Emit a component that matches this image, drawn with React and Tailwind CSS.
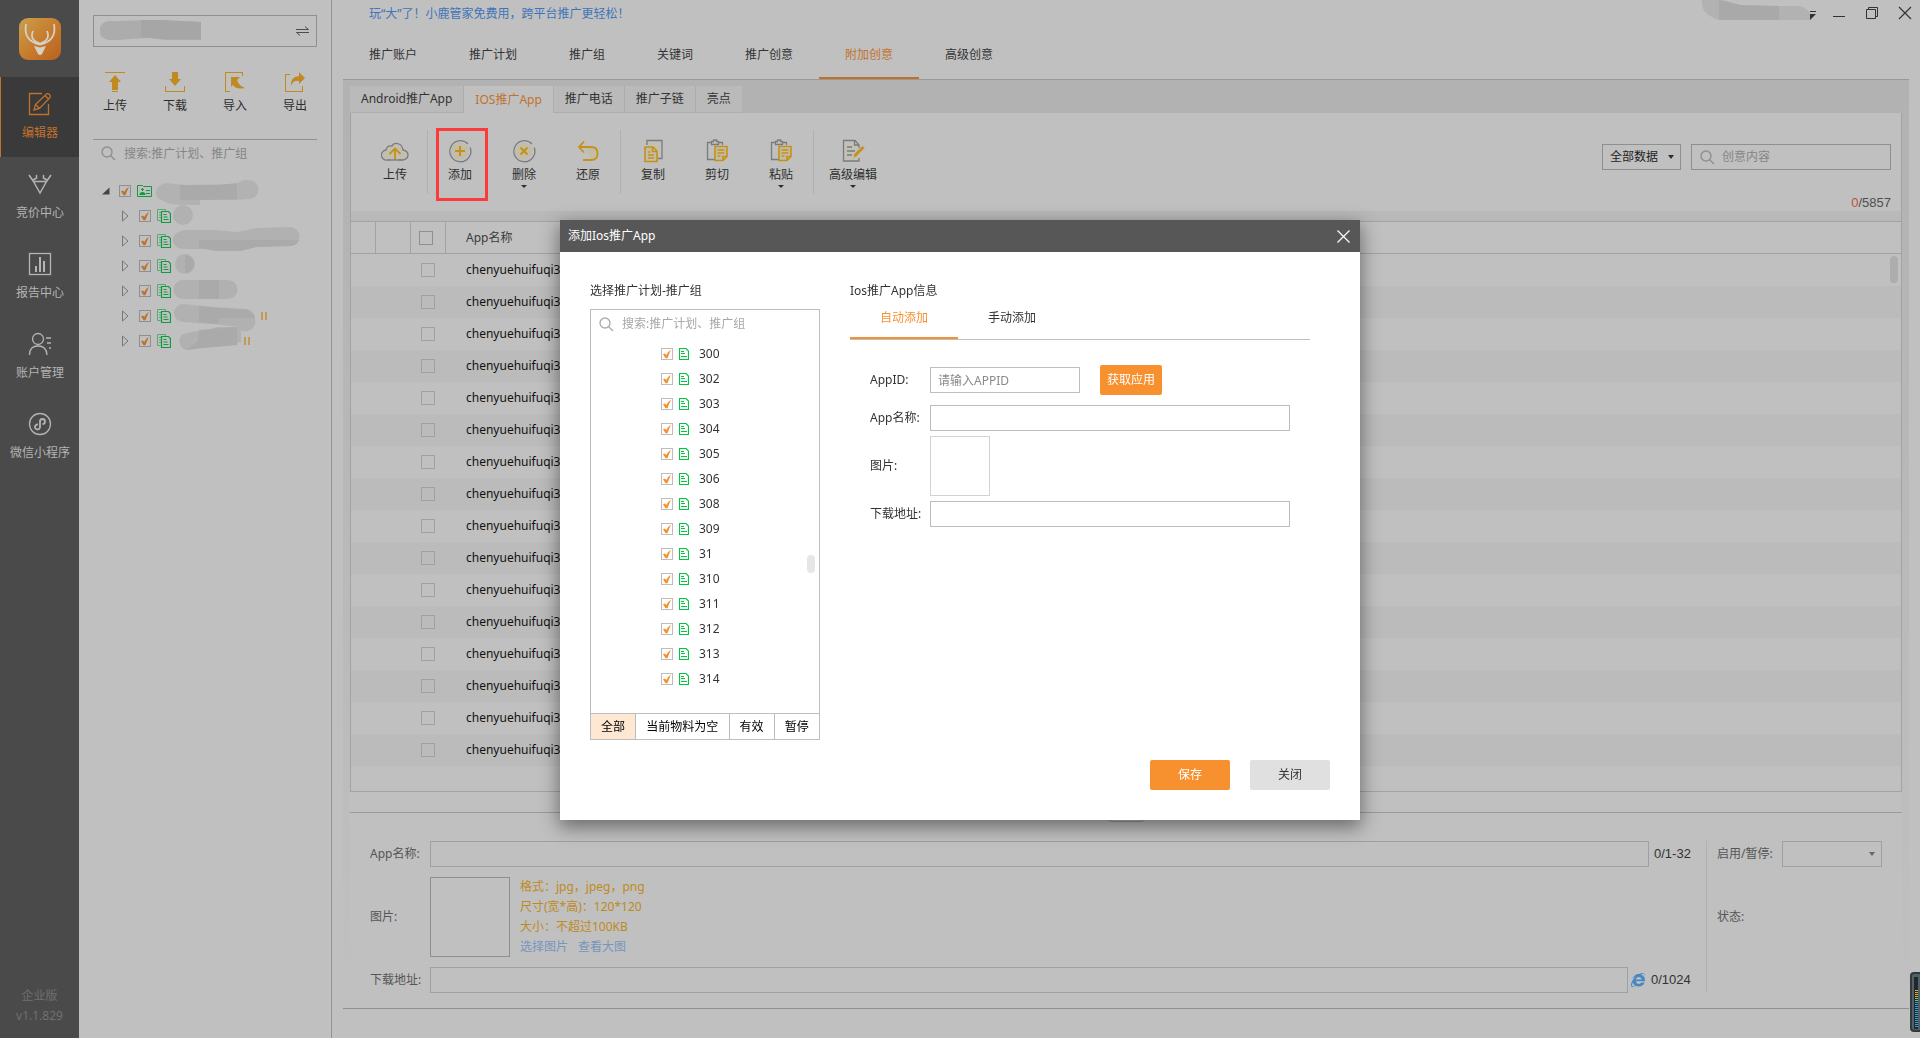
/* App.jsx */
import React, { useState } from 'react';
import { FaInternetExplorer } from 'react-icons/fa';

const sideItems = [
  { key: 'editor', label: '编辑器' },
  { key: 'bid', label: '竞价中心' },
  { key: 'report', label: '报告中心' },
  { key: 'account', label: '账户管理' },
  { key: 'wechat', label: '微信小程序' },
];

const mainTabs = ['推广账户', '推广计划', '推广组', '关键词', '推广创意', '附加创意', '高级创意'];
const subTabs = ['Android推广App', 'IOS推广App', '推广电话', '推广子链', '亮点'];
const groups = ['300', '302', '303', '304', '305', '306', '308', '309', '31', '310', '311', '312', '313', '314'];
const filters = ['全部', '当前物料为空', '有效', '暂停'];
const rows = Array.from({ length: 16 }, () => 'chenyuehuifuqi3.com');

// masked account names in the tree: outline, darker part and whether the plan is paused
const plans = [
  { id: 1, w: 22, d: 'M10 2a10 10 0 0 1 0 20a10 10 0 0 1 0-20z', dark: '' },
  { id: 2, w: 128, d: 'M9 2h32l24 2l18-4l34-1a9 9 0 0 1 0 19l-34 1l-16 4h-24l-8-2H9a9 9 0 0 1 0-18z', dark: 'M26 12h100q-2 6-10 6l-33 1l-16 4h-24l-17-3z' },
  { id: 3, w: 26, d: 'M12 1a10 10 0 0 1 0 20a10 10 0 0 1 0-20z', dark: 'M12 2a9 9 0 0 1 0 18z' },
  { id: 4, w: 66, d: 'M10 2h45a9 9 0 0 1 0 19H10a9 9 0 0 1 0-19z', dark: 'M26 2h20v19H26z' },
  { id: 5, w: 88, d: 'M10 1l30 3l34 2a10 10 0 0 1 8 10a10 10 0 0 1-18 8l-24-3l-30-2a9 9 0 0 1 0-18z', dark: 'M26 3l20 2l28 2q8 4 8 8H46v6l-20-2z', paused: true },
  { id: 6, w: 71, d: 'M10 6q10-3 24-4l10-3h20a9 9 0 0 1 4 9v6l-14 4l-26 2l-14 2a9 9 0 0 1-4-16z', dark: 'M26 2l38-3v18l-36 3l-14 2l11-9z', paused: true },
];

function SideIcon({ name }) {
  return (
    <svg width="24" height="24" viewBox="0 0 24 24" fill="none" stroke="currentColor" strokeWidth="1.3">
      {name === 'editor' && (
        <>
          <path d="M14 1.500H1.500V22.500H20.500V12" />
          <path d="M6 18l1.500-5.500L18.500 2q1.500-1 3 .5t.5 3L11.500 16.500zM17 3.500l3.500 3.500M7.500 12.500l4 4" />
        </>
      )}
      {name === 'bid' && (
        <path d="M1 3l4.500 6.500h13L23 3M5.500 9.500L12 21l6.500-11.500M8.500 3v3L5 8M15.500 3v3L19 8" strokeWidth="1.500" />
      )}
      {name === 'report' && (
        <>
          <rect x="1.500" y="1.500" width="21" height="21" />
          <path d="M8 14v6M12 5v15M16 9v11" strokeWidth="2" />
        </>
      )}
      {name === 'account' && (
        <path d="M10 1.500a5.500 5.500 0 1 1 0 11a5.500 5.500 0 1 1 0-11zM1.500 23q0-9 8.500-9t9 9M18 6h5M19 11h4M21 16h2" />
      )}
      {name === 'wechat' && (
        <>
          <circle cx="12" cy="12" r="10.500" />
          <path d="M10 12.500a2.500 2.500 0 1 0 2 2.500V9.500a2.500 2.500 0 1 1 2.500 2.500" strokeWidth="1.800" />
        </>
      )}
    </svg>
  );
}

function Logo() {
  return (
    <svg width="42" height="42" viewBox="0 0 42 42" fill="none">
      <defs>
        <linearGradient id="logoBg" x1="0" y1="0" x2="1" y2="1">
          <stop offset="0" stopColor="#c9a04c" />
          <stop offset="0.55" stopColor="#c67a2b" />
          <stop offset="1" stopColor="#b9601f" />
        </linearGradient>
      </defs>
      <rect width="42" height="42" rx="9" fill="url(#logoBg)" />
      <path d="M7 6q-3 17 14 20.500Q38 23 35 6M14 13q-4 9 7 12.500Q32 22 28 13" stroke="#d6d0c8" strokeWidth="1.800" />
      <path d="M15 28l6 1.500l6-1.500l-4 8q-2 2-4 0z" fill="#d6d0c8" />
    </svg>
  );
}

function TransferIcon({ name }) {
  return (
    <svg width="20" height="20" viewBox="0 0 20 20" fill="#c08a20">
      {name === '上传' && <path d="M0 0h20v1H0zM10 3l6 7h-3v8H7v-8H4zM7 19h6v1H7z" />}
      {name === '下载' && <path d="M7 0h6v7h3l-6 7l-6-7h3zM0 14h1v5h18v-5h1v6H0z" />}
      {name === '导入' && (
        <path d="M0 0h18v4h-1V1H1v18h4v1H0zM6 5h9l-3 3q2 6 8 8q-9 2-12-3l-2 2z" />
      )}
      {name === '导出' && (
        <path d="M0 2h5v1H1v16h16v-5h1v6H0zM14 0l6 6l-6 6V9q-6-1-8 5q-1-9 8-10z" />
      )}
    </svg>
  );
}

function ToolIcon({ name }) {
  const gray = '#7a7b80';
  const gold = '#c4921a';
  return (
    <svg width="28" height="24" viewBox="0 0 28 24" fill="none" strokeWidth="1.300">
      {name === '上传' && (
        <>
          <path d="M9 21H6a5 5 0 0 1-1-10q1-5 6-4q2-4 7-2q3 1 4 6q5 1 5 5t-5 5h-4" stroke={gray} fill="#c3bfb0" />
          <path d="M14 21V10M8.500 15L14 9.500L19.500 15" stroke={gold} strokeWidth="1.800" />
          <path d="M8 21h12" stroke={gray} />
        </>
      )}
      {(name === '添加' || name === '删除') && (
        <>
          <circle cx="14" cy="12" r="8.500" fill="#c3bca6" />
          <path d="M24.200 8.500a10.500 10.500 0 1 1-2.200-3.500" stroke={gray} />
        </>
      )}
      {name === '添加' && <path d="M14 7v10M9 12h10" stroke={gold} strokeWidth="2" />}
      {name === '删除' && <path d="M10.500 8.500l7 7M17.500 8.500l-7 7" stroke={gold} strokeWidth="2" />}
      {name === '还原' && (
        <>
          <path d="M11 9h7q4 2 4 6t-5 5z" fill="#c3bca6" />
          <path d="M10 2.500L5 8l5 5.500M5 8h12q6.500 0 6.500 6.500T17 21H9" stroke={gold} strokeWidth="1.800" />
        </>
      )}
      {name === '复制' && (
        <>
          <path d="M8 6V1.500h15v18h-4" stroke={gray} fill="#c3c0b4" />
          <path d="M6 8h8l4 4v10.500H6zM13.500 8v4.500H18M9 13h2M9 16h6M9 19h6" stroke={gold} strokeWidth="1.600" fill="#c3bca6" />
        </>
      )}
      {(name === '剪切' || name === '粘贴') && (
        <>
          <path d="M12 20.500H4.500v-17H8M15 3.500h4.500V6M8.500 5.500h7v-3h-2V1h-3v1.500h-2z" stroke={gray} />
          <path d="M12 7.500h12v10l-4 4h-8zM24 17.500h-4v4M14.500 11h7M14.500 14h7M14.500 17h3" stroke={gold} strokeWidth="1.600" fill="#c3bca6" />
        </>
      )}
      {name === '高级编辑' && (
        <>
          <path d="M20 19v3H4.500V1.500H16l4 4.500v3M15.500 1.500V6H20M8 8h5M8 12h8M8 16h5" stroke={gray} fill="#c3c0b4" />
          <path d="M16 16.500l8.500-8.500" stroke={gold} strokeWidth="3" />
          <path d="M14.500 18.500l1-3l2 2z" fill={gold} />
        </>
      )}
    </svg>
  );
}

function SearchIcon({ className }) {
  return (
    <svg width="15" height="15" viewBox="0 0 15 15" fill="none" stroke="currentColor" strokeWidth="1.400" className={className}>
      <circle cx="6" cy="6" r="5" />
      <path d="M9.500 9.500L14 14" />
    </svg>
  );
}

function CheckBox({ label, dim }) {
  return (
    <span className="grid shrink-0">
      <input
        type="checkbox"
        defaultChecked
        aria-label={label}
        className={`peer col-start-1 row-start-1 size-3 appearance-none border ${dim ? 'border-[#8f8f8f]' : 'border-[#bdbdbd]'}`}
      />
      <svg
        width="12"
        height="12"
        viewBox="0 0 12 12"
        className={`pointer-events-none invisible col-start-1 row-start-1 peer-checked:visible ${dim ? 'text-[#c0722d]' : 'text-[#f7902f]'}`}
      >
        <path d="M2 6.200l2-.7l1.200 1.500Q7 3.500 10 1.800Q8.200 5.500 6.500 10.200H4.500z" fill="currentColor" />
      </svg>
    </span>
  );
}

function DocIcon() {
  return (
    <svg width="10" height="12" viewBox="0 0 10 12" fill="none" stroke="#00c63f" strokeWidth="1.200" className="shrink-0">
      <path d="M.5 .5H7L9.500 3v8.500H.5zM2 3.500h3M2 5.500h4M2 8.500h6" />
    </svg>
  );
}

function PlanIcon() {
  return (
    <svg width="14" height="14" viewBox="0 0 14 14" fill="none" className="shrink-0">
      <path d="M3.500 11.500H.5V.5h8v2M2 3.500h2M2 6h2M2 8.500h2" stroke="#55a973" />
      <path d="M4.500 2.500h7l2 2v9h-9zM6.500 5.500h3M6.500 8h4M6.500 10.500h5" stroke="#109b41" strokeWidth="1.200" />
    </svg>
  );
}

function Sidebar() {
  const [active, setActive] = useState('editor');
  return (
    <nav className="flex w-[79px] shrink-0 flex-col bg-[#4a4a4a]">
      <div className="flex h-[77px] items-center justify-center">
        <Logo />
      </div>
      {sideItems.map((item) => (
        <button
          key={item.key}
          type="button"
          onClick={() => setActive(item.key)}
          className={`flex h-20 flex-col items-center gap-[7px] border-l pt-[15px] ${
            active === item.key
              ? 'border-[#c0722d] bg-[#3a3a3a] text-[#c0722d]'
              : 'border-transparent text-[#b4b4b4]'
          }`}
        >
          <SideIcon name={item.key} />
          <span className="leading-5">{item.label}</span>
        </button>
      ))}
      <div className="mt-auto pb-3 text-center leading-5 text-[#707070]">
        <p>企业版</p>
        <p>v1.1.829</p>
      </div>
    </nav>
  );
}

function PlanPanel() {
  return (
    <aside className="flex w-[253px] shrink-0 flex-col border-r border-[#949494] px-3.5 pt-[15px]">
      <button type="button" aria-label="切换账户" className="flex h-8 shrink-0 items-center justify-between border border-[#8f8f8f] pr-[7px] pl-1.5">
        <svg width="114" height="22" viewBox="0 0 114 22">
          <path d="M9 1h12l24-1l34 1l22 1v18H65l-14-2l-20 1l-12 1H9a9 9 0 0 1 0-19z" fill="#acacac" />
          <path d="M41 0h20l40 2v17H61l-20-2z" fill="#a6a6a6" />
        </svg>
        <svg width="13" height="10" viewBox="0 0 13 10" fill="none" stroke="#4c4c4c">
          <path d="M0 3.500h12.500L9 .5M13 6.500H.5L4 9.500" />
        </svg>
      </button>
      <div className="-mx-2 mt-[25px] grid grid-cols-4 text-[#2e2e2e]">
        {['上传', '下载', '导入', '导出'].map((name) => (
          <button key={name} type="button" className="flex flex-col items-center gap-1">
            <TransferIcon name={name} />
            <span className="leading-5">{name}</span>
          </button>
        ))}
      </div>
      <label className="mt-[23px] flex items-center border-t border-[#8f8f8f] pl-2 text-[#8f8f8f]">
        <SearchIcon />
        <input
          type="text"
          aria-label="搜索推广计划"
          placeholder="搜索:推广计划、推广组"
          className="ml-2 h-[27px] min-w-0 flex-1 outline-none placeholder:text-[#858585]"
        />
      </label>
      <ul className="mt-[11px]">
        <li className="flex h-[25px] items-center pl-[9px]">
          <svg width="8" height="8" viewBox="0 0 8 8">
            <path d="M7.500 .5v7H0z" fill="#444" />
          </svg>
          <span className="w-[9px]" />
          <CheckBox label="账户" dim />
          <svg width="15" height="12" viewBox="0 0 15 12" fill="none" stroke="#109b41" className="ml-1.5 shrink-0">
            <path d="M.5 .5h5l1 1h8v10H.5zM9 5.500h4M9 8.500h4M5.500 3v3M4 4.500h3" />
            <path d="M2.500 10q0-3 3-3t3 3z" fill="#109b41" stroke="none" />
          </svg>
          <svg width="104" height="25" viewBox="0 0 104 25" className="ml-[3px] overflow-visible">
            <path d="M10 5l22 2l50-1q6-5 12-4a9 9 0 0 1 0 19l-12 1H45v5H27q-18-1-25-8q-4-10 8-14z" fill="#b2b2b2" />
            <path d="M25 7h40l17-2v16l-37 1H25z" fill="#aaaaaa" />
          </svg>
        </li>
        {plans.map((plan) => (
          <li key={plan.id} className="flex h-[25px] items-center pl-[29px]">
            <svg width="7" height="12" viewBox="0 0 7 12" fill="none" stroke="#777">
              <path d="M.5 1v10L6 6z" />
            </svg>
            <span className="w-2.5" />
            <CheckBox label={`计划${plan.id}`} dim />
            <span className="w-1.5" />
            <PlanIcon />
            <svg width={plan.w} height="25" viewBox={`0 0 ${plan.w} 25`} className="ml-0.5 shrink-0 overflow-visible">
              <path d={plan.d} fill="#b1b1b1" />
              <path d={plan.dark} fill="#aaaaaa" />
            </svg>
            {plan.paused && (
              <svg width="6" height="8" viewBox="0 0 6 8" className="shrink-0">
                <path d="M0 0h2v8H0zM4 0h2v8H4z" fill="#c49a58" />
              </svg>
            )}
          </li>
        ))}
      </ul>
    </aside>
  );
}

function ToolButton({ name, caret, marked }) {
  return (
    <button
      type="button"
      className={`relative flex flex-col items-center pt-[26px] ${name === '高级编辑' ? 'w-[78px]' : 'w-16'}`}
    >
      <ToolIcon name={name} />
      <span className="mt-1 leading-4">{name}</span>
      {caret && (
        <svg width="6" height="3" viewBox="0 0 6 3" className="mt-0.5">
          <path d="M0 0h6L3 3z" fill="#2e2e2e" />
        </svg>
      )}
      {marked && <span className="absolute top-[15px] left-2 h-[73px] w-[52px] border-3 border-[#fd3a3a]" />}
    </button>
  );
}

function Toolbar() {
  const divider = <span className="mt-[17px] h-16 w-px bg-[#b0b0b0]" />;
  return (
    <div className="flex h-[98px] justify-between pr-2.5 pl-3 text-[#2e2e2e]">
      <div className="flex items-start">
        <ToolButton name="上传" />
        {divider}
        <ToolButton name="添加" marked />
        <ToolButton name="删除" caret />
        <ToolButton name="还原" />
        {divider}
        <ToolButton name="复制" />
        <ToolButton name="剪切" />
        <ToolButton name="粘贴" caret />
        {divider}
        <ToolButton name="高级编辑" caret />
      </div>
      <div className="flex flex-col items-end justify-between pt-[31px]">
        <div className="flex gap-2.5">
          <div className="grid items-center">
            <select aria-label="数据范围" className="col-start-1 row-start-1 h-[26px] w-[79px] appearance-none border border-[#8f8f8f] pl-[7px] text-[#1e1e1e]">
              <option>全部数据</option>
            </select>
            <svg width="6" height="4" viewBox="0 0 6 4" className="pointer-events-none col-start-1 row-start-1 mr-[7px] justify-self-end">
              <path d="M0 0h6L3 4z" fill="#2e2e2e" />
            </svg>
          </div>
          <label className="flex h-[26px] w-[200px] items-center border border-[#8f8f8f] pl-2 text-[#8f8f8f]">
            <SearchIcon />
            <input type="text" aria-label="搜索创意" placeholder="创意内容" className="ml-[7px] min-w-0 flex-1 outline-none placeholder:text-[#858585]" />
          </label>
        </div>
        <p className="font-['Liberation_Sans',sans-serif] text-[13px] leading-4 text-[#4f4f4f]">
          <span className="text-[#c0503c]">0</span>/5857
        </p>
      </div>
    </div>
  );
}

function DataTable() {
  const th = 'h-8 border-b border-[#a3a3a3] font-normal';
  return (
    <div className="relative flex-1 border-y border-[#a3a3a3]">
      <table className="w-full table-fixed border-separate border-spacing-0 text-left">
        <thead>
          <tr className="text-[#3c3c3c]">
            <th className={`${th} w-[25px] border-r`} />
            <th className={`${th} w-[35px] border-r`} />
            <th className={`${th} w-[35px] border-r`}>
              <input type="checkbox" aria-label="全选" className="ml-2 block size-3.5 appearance-none border border-[#8f8f8f]" />
            </th>
            <th className={`${th} pl-5`}>App名称</th>
          </tr>
        </thead>
        <tbody>
          {rows.map((name, index) => (
            <tr key={index} className="text-[#111] even:bg-[#bbbbbb]">
              <td className="h-8" />
              <td />
              <td>
                <input type="checkbox" aria-label={`选择第${index + 1}行`} className="ml-2.5 block size-3.5 appearance-none border border-[#a0a0a0]" />
              </td>
              <td className="pl-5">{name}</td>
            </tr>
          ))}
        </tbody>
      </table>
      <span className="absolute top-[34px] right-[3px] h-[27px] w-2 rounded-full bg-[#adadad]" />
    </div>
  );
}

function DetailForm() {
  const field = 'h-[26px] min-w-0 flex-1 border border-[#a0a0a0] px-2 outline-none';
  const count = "font-['Liberation_Sans',sans-serif] text-[13px] text-[#333]";
  return (
    <div className="relative flex border-t border-[#999] bg-[#c0c0c0] pt-7 pb-[15px] pl-5 text-[#555]">
      <span className="absolute top-0 left-1/2 h-[9px] w-9 -translate-x-1/2 rounded-b border border-t-0 border-[#999]" />
      <div className="flex flex-1 flex-col gap-2.5">
        <div className="flex items-center">
          <label htmlFor="detailName" className="w-[60px]">App名称:</label>
          <input id="detailName" type="text" className={field} />
          <span className={`w-[57px] pl-[5px] ${count}`}>0/1-32</span>
        </div>
        <div className="flex items-center">
          <span className="w-[60px]">图片:</span>
          <div className="size-20 border border-[#8f8f8f]" />
          <div className="ml-2.5 leading-5 text-[#bf8a1c]">
            <p>格式：jpg，jpeg，png</p>
            <p>尺寸(宽*高)：120*120</p>
            <p>大小：不超过100KB</p>
            <p className="flex gap-2.5 text-[#7795bd]">
              <a href="#choose">选择图片</a>
              <a href="#view">查看大图</a>
            </p>
          </div>
        </div>
        <div className="flex items-center">
          <label htmlFor="detailUrl" className="w-[60px]">下载地址:</label>
          <input id="detailUrl" type="text" className={field} />
          <span className={`flex w-[78px] items-center gap-1.5 pl-[3px] ${count}`}>
            <FaInternetExplorer className="size-3.5 text-[#4587c4]" />
            0/1024
          </span>
        </div>
      </div>
      <div className="flex w-[196px] flex-col gap-2.5 border-l border-[#b0b0b0] pl-2.5">
        <div className="flex items-center">
          <label htmlFor="detailStatus" className="w-[65px]">启用/暂停:</label>
          <div className="grid items-center">
            <select id="detailStatus" className="col-start-1 row-start-1 h-[26px] w-[100px] appearance-none border border-[#a0a0a0]" />
            <svg width="6" height="4" viewBox="0 0 6 4" className="pointer-events-none col-start-1 row-start-1 mr-[7px] justify-self-end">
              <path d="M0 0h6L3 4z" fill="#666" />
            </svg>
          </div>
        </div>
        <p className="flex h-20 items-center">状态:</p>
      </div>
    </div>
  );
}

function TitleBar() {
  return (
    <div className="flex h-[26px] shrink-0 items-center justify-between pr-2 pl-[37px]">
      <a href="#promo" className="pt-0.5 text-[#3f74b8]">玩“大”了！小鹿管家免费用，跨平台推广更轻松！</a>
      <div className="flex items-center text-[#333]">
        <svg width="109" height="26" viewBox="0 0 109 26">
          <path d="M1 0h21l20 6h55q8 1 12 7v7H18Q-1 14 1 0z" fill="#b2b2b2" />
          <path d="M18 0l22 5l38 1v14H18z" fill="#a9a9a9" />
        </svg>
        <button type="button" aria-label="菜单" className="pt-1">
          <svg width="6" height="9" viewBox="0 0 6 9" fill="currentColor">
            <path d="M0 0h6v1H0zM0 3h6L0 9z" />
          </svg>
        </button>
        <button type="button" aria-label="最小化" className="ml-[17px]">
          <svg width="12" height="14" viewBox="0 0 12 14" fill="none" stroke="currentColor">
            <path d="M0 10.500h12" />
          </svg>
        </button>
        <button type="button" aria-label="还原窗口" className="ml-[21px]">
          <svg width="12" height="14" viewBox="0 0 12 14" fill="none" stroke="currentColor">
            <path d="M.5 3.500h9v9h-9zM2.500 3.500v-2h9v9h-2" />
          </svg>
        </button>
        <button type="button" aria-label="关闭窗口" className="ml-5">
          <svg width="14" height="14" viewBox="0 0 14 14" fill="none" stroke="currentColor" strokeWidth="1.200">
            <path d="M1 1l12 12M13 1L1 13" />
          </svg>
        </button>
      </div>
    </div>
  );
}

function AddAppDialog() {
  const [mode, setMode] = useState('自动添加');
  const [filter, setFilter] = useState('全部');
  const field = 'h-[26px] border border-[#bdbdbd] px-[7px] outline-none placeholder:text-[#8a8a8a]';
  return (
    <div className="fixed inset-0 flex items-center justify-center pt-0.5">
      <section role="dialog" aria-label="添加Ios推广App" className="w-[800px] bg-white text-[#333] shadow-[0_6px_18px_1px_rgba(0,0,0,0.45)]">
        <header className="flex h-8 items-center justify-between bg-[#575757] pr-2.5 pl-2 text-white">
          <h2>添加Ios推广App</h2>
          <button type="button" aria-label="关闭对话框">
            <svg width="13" height="13" viewBox="0 0 13 13" fill="none" stroke="currentColor" strokeWidth="1.200">
              <path d="M.5 .5l12 12M12.500 .5l-12 12" />
            </svg>
          </button>
        </header>
        <div className="flex gap-[30px] px-[30px] pt-[29px]">
          <div className="w-[230px]">
            <h3 className="leading-5">选择推广计划-推广组</h3>
            <div className="relative mt-2 flex h-[431px] flex-col border border-[#bdbdbd]">
              <label className="flex h-7 items-center pl-2 text-[#adadad]">
                <SearchIcon />
                <input type="text" aria-label="搜索推广组" placeholder="搜索:推广计划、推广组" className="ml-2 min-w-0 flex-1 outline-none placeholder:text-[#a8a8a8]" />
              </label>
              <ul className="flex-1 pt-[3px]">
                {groups.map((g) => (
                  <li key={g} className="flex h-[25px] items-center pl-[70px]">
                    <CheckBox label={g} />
                    <span className="w-1.5" />
                    <DocIcon />
                    <span className="ml-2.5">{g}</span>
                  </li>
                ))}
              </ul>
              <div className="flex h-[26px] border-t border-[#bdbdbd] text-black">
                {filters.map((f) => (
                  <button
                    key={f}
                    type="button"
                    onClick={() => setFilter(f)}
                    className={`grow border-[#bdbdbd] not-last:border-r ${filter === f ? 'bg-[#fee8d4]' : ''}`}
                  >
                    {f}
                  </button>
                ))}
              </div>
              <span className="absolute top-[245px] right-1 h-[18px] w-2 rounded-full bg-[#e6e6e6]" />
            </div>
          </div>
          <div className="flex-1 pr-5">
            <h3 className="leading-5">Ios推广App信息</h3>
            <div className="flex h-[39px] border-b border-[#bdbdbd]">
              {['自动添加', '手动添加'].map((m) => (
                <button
                  key={m}
                  type="button"
                  onClick={() => setMode(m)}
                  className={`w-[108px] border-b-2 pb-[3px] ${mode === m ? 'border-[#f7902f] text-[#f7902f]' : 'border-transparent'}`}
                >
                  {m}
                </button>
              ))}
            </div>
            <div className="flex flex-col px-5 pt-[25px]">
              <div className="flex items-center">
                <label htmlFor="appId" className="w-[60px]">AppID:</label>
                <input id="appId" type="text" placeholder="请输入APPID" className={`${field} w-[150px]`} />
                <button type="button" className="ml-5 h-[30px] w-[62px] rounded-xs bg-[#f7902f] text-white">获取应用</button>
              </div>
              <div className="mt-2.5 flex items-center">
                <label htmlFor="appName" className="w-[60px]">App名称:</label>
                <input id="appName" type="text" className={`${field} flex-1`} />
              </div>
              <div className="mt-[5px] flex items-center">
                <span className="w-[60px]">图片:</span>
                <div className="size-[60px] border border-[#d2d2d2]" />
              </div>
              <div className="mt-[5px] flex items-center">
                <label htmlFor="appUrl" className="w-[60px]">下载地址:</label>
                <input id="appUrl" type="text" className={`${field} flex-1`} />
              </div>
            </div>
          </div>
        </div>
        <footer className="flex justify-end gap-5 px-[30px] pt-5 pb-[30px]">
          <button type="button" className="h-[30px] w-20 rounded-xs bg-[#f7902f] text-white">保存</button>
          <button type="button" className="h-[30px] w-20 rounded-xs bg-[#e0e0e0]">关闭</button>
        </footer>
      </section>
    </div>
  );
}

// small volume meter docked at the window edge
function Meter() {
  const colors = ['#e0b020', '#e0b020', '#e0c020', '#b8c840', '#80c860', '#60c8a0'];
  return (
    <div className="fixed right-0 bottom-1.5 flex h-[60px] w-2.5 justify-center rounded-l-sm border-2 border-r-0 border-[#33383c] bg-[#52606a] pt-[3px]">
      <svg width="4" height="52" viewBox="0 0 4 52">
        <rect width="4" height="52" fill="#22272b" />
        {Array.from({ length: 19 }, (_, i) => (
          <rect key={i} x="1" y={13 + i * 2} width="3" height="1" fill={colors[i] || '#2ea4dc'} />
        ))}
      </svg>
    </div>
  );
}

export default function App() {
  const [tab, setTab] = useState('附加创意');
  const [sub, setSub] = useState('IOS推广App');
  return (
    <div className="flex min-h-screen bg-[#c0c0c0] font-['Noto_Sans','Noto_Sans_CJK_SC',sans-serif] text-xs">
      <Sidebar />
      <PlanPanel />
      <main className="flex min-w-0 flex-1 flex-col pb-[29px]">
        <TitleBar />
        <nav className="mx-[11px] flex h-[54px] shrink-0 border-b border-[#999] text-[#333]">
          {mainTabs.map((t) => (
            <button
              key={t}
              type="button"
              onClick={() => setTab(t)}
              className={`border-b-2 px-[26px] pt-1.5 ${tab === t ? 'border-[#c0722d] text-[#c0722d]' : 'border-transparent'}`}
            >
              {t}
            </button>
          ))}
        </nav>
        <div className="mx-[11px] flex flex-1 flex-col border-b border-[#8f8f8f] bg-linear-to-b from-[#b2b2b2] to-[#c0c0c0] px-[7px] pt-1.5">
          <div className="flex h-[27px] text-[#333]">
            {subTabs.map((s) => (
              <button
                key={s}
                type="button"
                onClick={() => setSub(s)}
                className={`border-r px-[11px] ${
                  sub === s ? 'border-[#adadad] bg-[#c0c0c0] text-[#c0722d]' : 'border-b border-[#adadad] bg-[#bababa] last:border-r-0'
                }`}
              >
                {s}
              </button>
            ))}
          </div>
          <div className="flex flex-1 flex-col border-x border-[#a3a3a3] bg-[#c0c0c0]">
            <Toolbar />
            <div className="h-2.5 bg-[#b9b9b9]" />
            <DataTable />
          </div>
          <div className="h-5 bg-[#c0c0c0]" />
          <DetailForm />
        </div>
      </main>
      <AddAppDialog />
      <Meter />
    </div>
  );
}
